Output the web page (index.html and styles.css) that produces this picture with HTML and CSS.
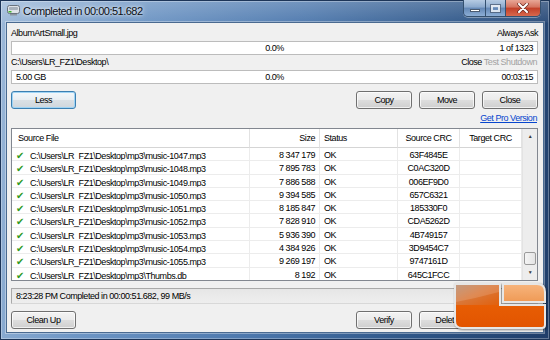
FILE: index.html
```html
<!DOCTYPE html>
<html lang="en">
<head>
  <meta charset="UTF-8" />
  <title>Completed in 00:00:51.682</title>
  <link rel="stylesheet" href="styles.css">
</head>
<body>
  <div class="window">
    <div class="titlebar">
      <svg class="app-icon" width="13" height="11" viewBox="0 0 13 11">
        <rect x="0.5" y="0.5" width="12" height="8" rx="2" fill="#dfe3e8" stroke="#69737e" />
        <rect x="2" y="2" width="9" height="3" rx="1" fill="#a9b2bc" />
        <rect x="1.5" y="6" width="3" height="1.5" fill="#3fb12c" />
        <rect x="3" y="9" width="7" height="1.5" fill="#8c959f" />
      </svg>
      <span class="title">Completed in 00:00:51.682</span>
      <div class="caption-btns">
        <span class="cb min"><span class="min-bar"></span></span>
        <span class="cb max"><span class="max-box"></span></span>
        <span class="cb close">
          <svg width="12" height="10" viewBox="0 0 12 10">
            <path d="M2 1 L10 9 M10 1 L2 9" stroke="#6a2a22" stroke-width="3.4" stroke-linecap="round" />
            <path d="M2 1 L10 9 M10 1 L2 9" stroke="#fff" stroke-width="2" stroke-linecap="round" />
          </svg>
        </span>
      </div>
    </div>

    <div class="client">
      <div class="line">
        <span>AlbumArtSmall.jpg</span>
        <span>Always Ask</span>
      </div>
      <div class="progress">
        <span class="p-left"></span>
        <span class="p-mid">0.0%</span>
        <span class="p-right">1 of 1323</span>
      </div>
      <div class="line">
        <span>C:\Users\LR_FZ1\Desktop\</span>
        <span class="after-opts">Close <span class="dim">Test</span> <span class="dim">Shutdown</span></span>
      </div>
      <div class="progress">
        <span class="p-left">5.00 GB</span>
        <span class="p-mid">0.0%</span>
        <span class="p-right">00:03:15</span>
      </div>

      <div class="btn-row">
        <button class="btn btn-default btn-wide">Less</button>
        <span class="spacer"></span>
        <button class="btn">Copy</button>
        <button class="btn">Move</button>
        <button class="btn">Close</button>
      </div>
      <div class="link-row"><a href="#">Get Pro Version</a></div>

      <div class="list">
        <div class="grid">
          <div class="th first">Source File</div>
          <div class="th num">Size</div>
          <div class="th">Status</div>
          <div class="th center">Source CRC</div>
          <div class="th center">Target CRC</div>

          <div class="td first"><span class="ok">✔</span>C:\Users\LR_FZ1\Desktop\mp3\music-1047.mp3</div>
          <div class="td num">8 347 179</div><div class="td">OK</div><div class="td center">63F4845E</div><div class="td"></div>

          <div class="td first"><span class="ok">✔</span>C:\Users\LR_FZ1\Desktop\mp3\music-1048.mp3</div>
          <div class="td num">7 895 783</div><div class="td">OK</div><div class="td center">C0AC320D</div><div class="td"></div>

          <div class="td first"><span class="ok">✔</span>C:\Users\LR_FZ1\Desktop\mp3\music-1049.mp3</div>
          <div class="td num">7 886 588</div><div class="td">OK</div><div class="td center">006EF9D0</div><div class="td"></div>

          <div class="td first"><span class="ok">✔</span>C:\Users\LR_FZ1\Desktop\mp3\music-1050.mp3</div>
          <div class="td num">9 394 585</div><div class="td">OK</div><div class="td center">657C6321</div><div class="td"></div>

          <div class="td first"><span class="ok">✔</span>C:\Users\LR_FZ1\Desktop\mp3\music-1051.mp3</div>
          <div class="td num">8 185 847</div><div class="td">OK</div><div class="td center">185330F0</div><div class="td"></div>

          <div class="td first"><span class="ok">✔</span>C:\Users\LR_FZ1\Desktop\mp3\music-1052.mp3</div>
          <div class="td num">7 828 910</div><div class="td">OK</div><div class="td center">CDA5262D</div><div class="td"></div>

          <div class="td first"><span class="ok">✔</span>C:\Users\LR_FZ1\Desktop\mp3\music-1053.mp3</div>
          <div class="td num">5 936 390</div><div class="td">OK</div><div class="td center">4B749157</div><div class="td"></div>

          <div class="td first"><span class="ok">✔</span>C:\Users\LR_FZ1\Desktop\mp3\music-1054.mp3</div>
          <div class="td num">4 384 926</div><div class="td">OK</div><div class="td center">3D9454C7</div><div class="td"></div>

          <div class="td first"><span class="ok">✔</span>C:\Users\LR_FZ1\Desktop\mp3\music-1055.mp3</div>
          <div class="td num">9 269 197</div><div class="td">OK</div><div class="td center">9747161D</div><div class="td"></div>

          <div class="td first"><span class="ok">✔</span>C:\Users\LR_FZ1\Desktop\mp3\Thumbs.db</div>
          <div class="td num">8 192</div><div class="td">OK</div><div class="td center">645C1FCC</div><div class="td"></div>
        </div>
        <div class="scrollbar">
          <span class="sb-arrow">▲</span>
          <span class="sb-track"><span class="sb-thumb"></span></span>
          <span class="sb-arrow">▼</span>
        </div>
      </div>

      <div class="statusbar">8:23:28 PM Completed in 00:00:51.682, 99 MB/s</div>

      <div class="btn-row bottom">
        <button class="btn btn-wide">Clean Up</button>
        <span class="spacer"></span>
        <button class="btn">Verify</button>
        <button class="btn">Delete</button>
        <button class="btn">Close</button>
      </div>
    </div>

    <!-- site watermark sitting over the bottom right corner -->
    <svg class="logo" width="97" height="48" viewBox="0 0 97 48">
      <defs>
        <linearGradient id="gUp" x1="0" y1="0" x2="1" y2="1">
          <stop offset="0" stop-color="#b98a6c" />
          <stop offset="0.45" stop-color="#d9783a" />
          <stop offset="1" stop-color="#e2600c" />
        </linearGradient>
        <linearGradient id="gSq" x1="0" y1="0" x2="0" y2="1">
          <stop offset="0" stop-color="#f7b57e" />
          <stop offset="1" stop-color="#ef9a55" />
        </linearGradient>
        <linearGradient id="gBar" x1="0" y1="0" x2="0" y2="1">
          <stop offset="0" stop-color="#ec6608" />
          <stop offset="1" stop-color="#e25400" />
        </linearGradient>
      </defs>
      <path d="M2 2 H47 V23 H92 V43 Q92 46 89 46 H9 Q2 46 2 39 Z" fill="url(#gBar)" stroke="#e6e6e6" stroke-width="2" />
      <path d="M3 3 H46 V23 H3 Z" fill="url(#gUp)" />
      <path d="M3 3 H46 V10 Q24 16 3 20 Z" fill="#fff" opacity="0.14" />
      <path d="M50 2 H84 Q92 2 92 10 V20 H50 Z" fill="url(#gSq)" stroke="#e6e6e6" stroke-width="2" />
    </svg>
  </div>
</body>
</html>
```

FILE: styles.css
```css
* {
  box-sizing: border-box;
}

body {
  margin: 0;
  width: 550px;
  height: 340px;
  overflow: hidden;
  font-family: "Liberation Sans", Arial, sans-serif;
  font-size: 9px;
  letter-spacing: -0.45px;
  color: #000;
}

.window {
  position: relative;
  width: 550px;
  height: 340px;
  padding: 0 6px 7px;
  display: flex;
  flex-direction: column;
  background:
    linear-gradient(to bottom, rgba(255,255,255,0.22) 0, rgba(255,255,255,0.05) 22px, rgba(255,255,255,0) 23px),
    linear-gradient(100deg, #9db9d9 0%, #6e96c5 22%, #4d78ad 50%, #2f5789 76%, #1f3d69 100%);
  box-shadow: inset 0 0 0 1px #1d3558, inset 0 0 0 2px rgba(255,255,255,0.3);
}

/* title bar */
.titlebar {
  height: 22px;
  display: flex;
  align-items: flex-start;
}

.app-icon {
  margin: 5px 0 0 1px;
}

.title {
  margin-left: 3px;
  line-height: 22px;
  font-size: 11px;
  letter-spacing: -0.5px;
  color: #0b0f16;
  text-shadow: 0 0 6px rgba(255,255,255,0.9), 0 0 3px rgba(255,255,255,0.8);
}

.caption-btns {
  margin-left: auto;
  margin-right: 3px;
  height: 17px;
  display: flex;
  border: 1px solid #34506f;
  border-top: none;
  border-radius: 0 0 5px 5px;
  overflow: hidden;
  box-shadow: 0 1px 0 rgba(255,255,255,0.35);
}

.cb {
  display: flex;
  align-items: center;
  justify-content: center;
  background: linear-gradient(#b6cbe3, #8ba9cd 45%, #6387b5 50%, #8caed6);
  border-right: 1px solid #34506f;
}

.cb.min {
  width: 22px;
  align-items: flex-end;
  padding-bottom: 4px;
}

.min-bar {
  width: 10px;
  height: 3px;
  background: #fff;
  border: 1px solid #4a5a70;
}

.cb.max {
  width: 20px;
}

.max-box {
  width: 9px;
  height: 7px;
  border: 2px solid #fff;
  box-shadow: 0 0 0 1px #4a5a70;
  opacity: 0.75;
}

.cb.close {
  width: 34px;
  border-right: none;
  background: linear-gradient(#e8a797, #d4725e 45%, #c23f28 50%, #d8684d);
}

/* client area */
.client {
  flex: 1;
  display: flex;
  flex-direction: column;
  padding: 3px 5px 0 4px;
  background: #f0f0f0;
  border: 1px solid #4a6a90;
  box-shadow: 0 0 0 1px rgba(255,255,255,0.35);
}

.line {
  height: 14px;
  display: flex;
  justify-content: space-between;
  align-items: center;
}

.after-opts {
  padding-right: 1px;
}

.dim {
  color: #a2a2a2;
}

.progress {
  height: 14px;
  margin-top: 1px;
  display: grid;
  grid-template-columns: 1fr auto 1fr;
  align-items: center;
  padding: 0 4px;
  background: #fff;
  border: 1px solid #bcbcbc;
}

.p-right {
  text-align: right;
}

.progress + .line {
  margin-top: -1px;
  height: 15px;
}

.btn-row {
  display: flex;
  gap: 7px;
  margin-top: 7px;
}

.spacer {
  flex: 1;
}

.btn {
  width: 56px;
  height: 18px;
  padding: 0;
  font: inherit;
  letter-spacing: inherit;
  color: #000;
  border: 1px solid #707070;
  border-radius: 3px;
  background: linear-gradient(#f3f3f3, #ebebeb 48%, #dddddd 52%, #cfcfcf);
  box-shadow: inset 0 0 0 1px rgba(255,255,255,0.7);
}

.btn-wide {
  width: 65px;
}

.btn-default {
  border-color: #3c7fb1;
  box-shadow: inset 0 0 0 1px #9fd4f5;
  background: linear-gradient(#f4f8fb, #e9eef2 48%, #dae0e5 52%, #cfd6dc);
}

.link-row {
  height: 18px;
  line-height: 18px;
  text-align: right;
  padding-right: 1px;
}

.link-row a {
  color: #0645ce;
}

/* file list */
.list {
  height: 153px;
  margin-top: 1px;
  display: flex;
  background: #fff;
  border: 1px solid #828790;
  overflow: hidden;
}

.grid {
  flex: 1;
  display: grid;
  grid-template-columns: 238px 70px 78px 62px 62px;
  grid-template-rows: 19px;
  grid-auto-rows: 13.3px;
  align-content: start;
}

.th,
.td {
  white-space: nowrap;
  overflow: hidden;
  border-right: 1px solid #ececec;
  border-bottom: 1px solid #ececec;
  padding: 0 4px;
}

.th {
  line-height: 18px;
  border-right-color: #e2e2e2;
  border-bottom-color: #d5d5d5;
}

.td {
  line-height: 13px;
  padding-top: 1px;
}

.th.first {
  padding-left: 6px;
}

.td.first {
  padding-left: 4px;
}

.num {
  text-align: right;
}

.center {
  text-align: center;
}

.ok {
  display: inline-block;
  width: 14px;
  font-family: "DejaVu Sans", sans-serif;
  font-size: 10px;
  color: #2f9a25;
}

.scrollbar {
  width: 15px;
  display: flex;
  flex-direction: column;
  background: #ededed;
  border-left: 1px solid #e3e3e3;
}

.sb-arrow {
  height: 15px;
  text-align: center;
  line-height: 15px;
  font-size: 5px;
  color: #3a3a3a;
}

.sb-track {
  flex: 1;
  display: flex;
  flex-direction: column;
  justify-content: flex-end;
  padding: 0 1px;
}

.sb-thumb {
  height: 13px;
  border: 1px solid #9a9a9a;
  border-radius: 2px;
  background: linear-gradient(to right, #f4f4f4, #e4e4e4);
}

.statusbar {
  height: 16px;
  margin-top: 7px;
  padding-left: 4px;
  line-height: 14px;
  background: linear-gradient(#e6e6e6, #eeeeee);
  border: 1px solid #a9a9a9;
  border-right-color: #d8d8d8;
  border-bottom-color: #d8d8d8;
}

.bottom {
  margin-top: 7px;
}

.logo {
  position: absolute;
  left: 453px;
  top: 282px;
  filter: drop-shadow(1px 1px 1px rgba(0,0,0,0.45));
}
```
